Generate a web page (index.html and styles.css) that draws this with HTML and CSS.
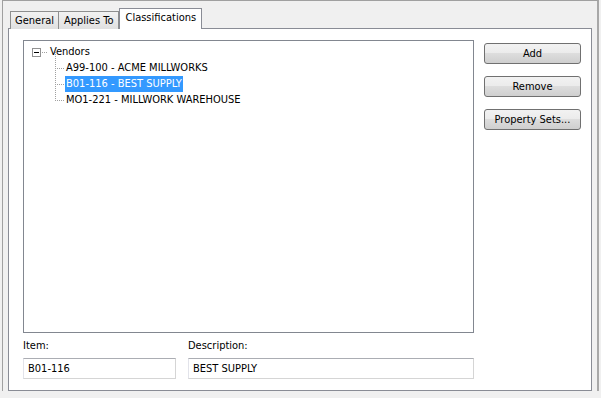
FILE: index.html
```html
<!DOCTYPE html>
<html>
<head>
<meta charset="utf-8">
<link rel="stylesheet" href="styles.css">
</head>
<body>
<div class="frame">
  <div class="tabs">
    <div class="tab">General</div>
    <div class="tab wide">Applies To</div>
    <div class="tab active">Classifications</div>
  </div>
  <div class="panel">
    <div class="main">
      <div class="tree">
        <div class="node root">
          <span class="toggle"><svg width="9" height="9" viewBox="0 0 9 9"><rect x="0.5" y="0.5" width="8" height="8" fill="#fff" stroke="#919191"/><path d="M2 4.5h5" stroke="#000"/></svg></span>
          <span class="hdot"></span>
          <span class="label">Vendors</span>
        </div>
        <div class="children">
          <div class="node child"><span class="hdot"></span><span class="label">A99-100 - ACME MILLWORKS</span></div>
          <div class="node child"><span class="hdot"></span><span class="label selected">B01-116 - BEST SUPPLY</span></div>
          <div class="node child last"><span class="hdot"></span><span class="label">MO1-221 - MILLWORK WAREHOUSE</span></div>
        </div>
      </div>
      <div class="buttons">
        <button class="btn">Add</button>
        <button class="btn">Remove</button>
        <button class="btn">Property Sets...</button>
      </div>
    </div>
    <div class="fields">
      <div class="field item">
        <label>Item:</label>
        <div class="input">B01-116</div>
      </div>
      <div class="field desc">
        <label>Description:</label>
        <div class="input">BEST SUPPLY</div>
      </div>
    </div>
  </div>
</div>
</body>
</html>
```

FILE: styles.css
```css
* { box-sizing: border-box; }
html, body { margin: 0; padding: 0; }
body {
  width: 601px;
  height: 398px;
  background: #f0f0f0;
  font-family: "DejaVu Sans Condensed", "DejaVu Sans", sans-serif;
  font-stretch: semi-condensed;
  font-size: 11px;
  color: #000;
  overflow: hidden;
}
.frame {
  margin-left: 2px;
  width: 597px;
  height: 391px;
  border: 1px solid #a0a0a0;
  border-bottom: none;
  border-right: 2px solid #a8a8a8;
  padding: 8px 5px 0 5px;
  display: flex;
  flex-direction: column;
}
.tabs {
  display: flex;
  align-items: flex-end;
  height: 20px;
  padding-left: 2px;
  position: relative;
  z-index: 2;
  margin-bottom: -1px;
}
.tab {
  height: 18px;
  padding: 0 4px;
  border: 1px solid #8e8f8f;
  border-bottom: none;
  margin-right: -1px;
  background: linear-gradient(#f2f2f2, #e0e0e0);
  line-height: 17px;
  white-space: nowrap;
}
.tab.wide { padding: 0 5px; margin-right: 0; }
.tab.active {
  height: 21px;
  padding: 0 5px;
  background: #fff;
  border-color: #898c95;
  line-height: 18px;
}
.panel {
  flex: 1;
  background: #fff;
  border: 1px solid #898c95;
  padding: 11px 11px 0 14px;
  display: flex;
  flex-direction: column;
}
.main {
  display: flex;
  gap: 10px;
}
.tree {
  flex: none;
  width: 451px;
  height: 293px;
  border: 1px solid #828790;
  padding: 3px 0 0 8px;
}
.node {
  display: flex;
  align-items: center;
  height: 16px;
}
.toggle { width: 9px; height: 9px; display: flex; }
.hdot {
  width: 6px;
  height: 1px;
  background-image: linear-gradient(to right, #a0a0a0 50%, transparent 50%);
  background-size: 2px 1px;
  margin: 0 1px 0 1px;
}
.label { padding: 0 1px; line-height: 16px; white-space: nowrap; }
.selected { background: #3399ff; color: #fff; }
.children {
  margin-left: 23px;
}
.child {
  position: relative;
}
.child::before {
  content: "";
  position: absolute;
  left: 0;
  top: -8px;
  width: 1px;
  height: 16px;
  background-image: linear-gradient(#a0a0a0 50%, transparent 50%);
  background-size: 1px 2px;
}
.child .hdot { width: 9px; margin: 0 1px 0 0; }
.buttons {
  flex: none;
  display: flex;
  flex-direction: column;
  gap: 12px;
  padding-top: 3px;
}
.btn {
  width: 97px;
  height: 21px;
  font-family: "DejaVu Sans Condensed", "DejaVu Sans", sans-serif;
  font-stretch: semi-condensed;
  font-size: 11px;
  color: #000;
  border: 1px solid #707070;
  border-radius: 3px;
  background: linear-gradient(#f2f2f2 0%, #ebebeb 50%, #dddddd 50%, #cfcfcf 100%);
  padding: 0;
}
.fields {
  display: flex;
  gap: 12px;
  margin-top: 6px;
}
.field { display: flex; flex-direction: column; }
.field label { height: 19px; line-height: 14px; }
.item { width: 153px; }
.desc { width: 286px; }
.input {
  height: 21px;
  border: 1px solid #d5d5d5;
  border-top-color: #abadb3;
  border-left-color: #e2e3ea;
  padding: 0 4px;
  line-height: 19px;
}
```
